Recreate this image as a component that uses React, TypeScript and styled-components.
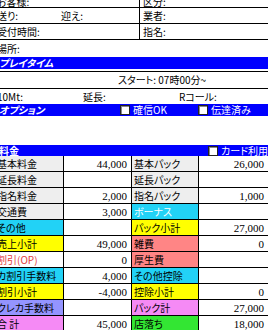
import styled, { createGlobalStyle } from 'styled-components';

const GlobalStyle = createGlobalStyle`
  html, body {
    margin: 0;
    padding: 0;
    background: #ffffff;
    overflow: hidden;
  }
  body {
    font-family: "Noto Sans CJK JP", "Noto Sans", sans-serif;
    font-size: 10px;
    font-feature-settings: "palt";
    color: #000000;
  }
`;

type Fill = 'grey' | 'cyan' | 'yellow' | 'salmon' | 'violet' | 'pink' | 'green' | 'white';

const fills: Record<Fill, string> = {
  grey: '#eeeeee',
  cyan: '#22d2f6',
  yellow: '#ffff00',
  salmon: '#ff8585',
  violet: '#9494ff',
  pink: '#f58af5',
  green: '#33e633',
  white: '#ffffff',
};

type FeeRow = {
  left: string;
  leftFill: Fill;
  leftValue: string;
  leftInk?: string;
  right: string;
  rightFill: Fill;
  rightValue: string;
  rightInk?: string;
};

const rows: FeeRow[] = [
  { left: '基本料金', leftFill: 'grey', leftValue: '44,000', right: '基本パック', rightFill: 'grey', rightValue: '26,000' },
  { left: '延長料金', leftFill: 'grey', leftValue: '', right: '延長パック', rightFill: 'grey', rightValue: '' },
  { left: '指名料金', leftFill: 'grey', leftValue: '2,000', right: '指名パック', rightFill: 'grey', rightValue: '1,000' },
  { left: '交通費', leftFill: 'grey', leftValue: '3,000', right: 'ボーナス', rightFill: 'cyan', rightValue: '', rightInk: '#ffffff' },
  { left: 'その他', leftFill: 'cyan', leftValue: '', right: 'パック小計', rightFill: 'yellow', rightValue: '27,000' },
  { left: '売上小計', leftFill: 'yellow', leftValue: '49,000', right: '雑費', rightFill: 'salmon', rightValue: '0' },
  { left: '割引(OP)', leftFill: 'white', leftValue: '0', leftInk: '#e23a3a', right: '厚生費', rightFill: 'salmon', rightValue: '' },
  { left: 'カ割引手数料', leftFill: 'cyan', leftValue: '4,000', right: 'その他控除', rightFill: 'cyan', rightValue: '' },
  { left: '割引小計', leftFill: 'yellow', leftValue: '-4,000', right: '控除小計', rightFill: 'yellow', rightValue: '0' },
  { left: 'クレカ手数料', leftFill: 'violet', leftValue: '', right: 'パック計', rightFill: 'pink', rightValue: '27,000' },
  { left: '合 計', leftFill: 'pink', leftValue: '45,000', right: '店落ち', rightFill: 'green', rightValue: '18,000' },
];

export default function App() {
  return (
    <>
      <GlobalStyle />
      <Sheet>
        <InfoGrid>
          <TopCell>
            <Clipped>お客様:</Clipped>
          </TopCell>
          <TopCell $last>
            <span>区分:</span>
          </TopCell>
          <InfoCell>
            <Clipped>送り:</Clipped>
            <Pickup>迎え:</Pickup>
          </InfoCell>
          <InfoCell $last>
            <span>業者:</span>
          </InfoCell>
          <InfoCell>
            <Clipped>受付時間:</Clipped>
          </InfoCell>
          <InfoCell $last>
            <span>指名:</span>
          </InfoCell>
        </InfoGrid>
        <PlaceRow>
          <Clipped>場所:</Clipped>
        </PlaceRow>

        <SectionBar>
          <BarTitle $italic>プレイタイム</BarTitle>
        </SectionBar>
        <StartRow>スタート: 07時00分~</StartRow>
        <ExtendRow>
          <ExtCell $width={83}>
            <Clipped>10Mt:</Clipped>
          </ExtCell>
          <ExtCell $width={96}>延長:</ExtCell>
          <ExtCell $width={89}>Rコール:</ExtCell>
        </ExtendRow>

        <SectionBar>
          <BarTitle $italic>オプション</BarTitle>
          <CheckGroup $left={120}>
            <CheckBox />
            <span>確信OK</span>
          </CheckGroup>
          <CheckGroup $left={198}>
            <CheckBox />
            <span>伝達済み</span>
          </CheckGroup>
        </SectionBar>

        <Gap />

        <SectionBar $height={11}>
          <BarTitle>料金</BarTitle>
          <CheckGroup $left={208}>
            <CheckBox />
            <span>カード利用</span>
          </CheckGroup>
        </SectionBar>

        <FeeGrid>
          {rows.map((r) => (
            <FeeLine key={r.left}>
              <LabelCell $fill={r.leftFill} $ink={r.leftInk} $clip>
                {r.left}
              </LabelCell>
              <ValueCell>{r.leftValue}</ValueCell>
              <LabelCell $fill={r.rightFill} $ink={r.rightInk}>
                {r.right}
              </LabelCell>
              <ValueCell $edge>{r.rightValue}</ValueCell>
            </FeeLine>
          ))}
        </FeeGrid>
      </Sheet>
    </>
  );
}

const Sheet = styled.div`
  width: 268px;
  height: 330px;
  overflow: hidden;
  display: flex;
  flex-direction: column;
`;

const Clipped = styled.span`
  margin-left: -3px;
  white-space: nowrap;
`;

const InfoGrid = styled.div`
  display: grid;
  grid-template-columns: 140px 128px;
  grid-template-rows: 8px 16px 16px;
  flex-shrink: 0;
`;

const TopCell = styled.div<{ $last?: boolean }>`
  display: flex;
  align-items: flex-end;
  overflow: hidden;
  line-height: 10px;
  padding-left: ${(p) => (p.$last ? '3px' : '0')};
  border-right: ${(p) => (p.$last ? 'none' : '1px solid #000')};
  border-bottom: 1px solid #000;
`;

const InfoCell = styled.div<{ $last?: boolean }>`
  display: flex;
  align-items: center;
  line-height: 12px;
  padding-left: ${(p) => (p.$last ? '3px' : '0')};
  border-right: ${(p) => (p.$last ? 'none' : '1px solid #000')};
  border-bottom: 1px solid #000;
`;

const Pickup = styled.span`
  margin-left: 43px;
`;

const PlaceRow = styled.div`
  height: 17px;
  display: flex;
  align-items: center;
  line-height: 12px;
  flex-shrink: 0;
`;

const SectionBar = styled.div<{ $height?: number }>`
  position: relative;
  height: ${(p) => p.$height ?? 12}px;
  background: #0000ff;
  color: #ffffff;
  display: flex;
  align-items: center;
  flex-shrink: 0;
  overflow: hidden;
  white-space: nowrap;
`;

const BarTitle = styled.span<{ $italic?: boolean }>`
  font-weight: 700;
  font-style: ${(p) => (p.$italic ? 'italic' : 'normal')};
  line-height: 10px;
  margin-left: -1px;
`;

const CheckGroup = styled.div<{ $left: number }>`
  position: absolute;
  left: ${(p) => p.$left}px;
  top: 0;
  bottom: 0;
  display: flex;
  align-items: center;
  gap: 3px;
  line-height: 10px;
  white-space: nowrap;
`;

const CheckBox = styled.span`
  width: 8px;
  height: 8px;
  flex-shrink: 0;
  background: #ffffff;
  border: 1px solid #222222;
  box-shadow: inset 1px 1px 0 #888888;
`;

const StartRow = styled.div`
  height: 16px;
  margin-top: 2px;
  border-top: 1px solid #000;
  border-bottom: 1px solid #000;
  display: flex;
  align-items: center;
  padding-left: 118px;
  line-height: 12px;
  flex-shrink: 0;
`;

const ExtendRow = styled.div`
  height: 15px;
  display: flex;
  align-items: center;
  line-height: 12px;
  flex-shrink: 0;
`;

const ExtCell = styled.div<{ $width: number }>`
  width: ${(p) => p.$width}px;
  flex-shrink: 0;
`;

const Gap = styled.div`
  height: 29px;
  flex-shrink: 0;
`;

const FeeGrid = styled.div`
  display: flex;
  flex-direction: column;
`;

const FeeLine = styled.div`
  display: grid;
  grid-template-columns: 64px 68px 67px 69px;
  height: 16px;
  flex-shrink: 0;
`;

const LabelCell = styled.div<{ $fill: Fill; $ink?: string; $clip?: boolean }>`
  background: ${(p) => fills[p.$fill]};
  color: ${(p) => p.$ink ?? '#000000'};
  border-right: 1px solid #000;
  border-bottom: 1px solid #000;
  display: flex;
  align-items: center;
  padding-left: ${(p) => (p.$clip ? '0' : '2px')};
  text-indent: ${(p) => (p.$clip ? '-3px' : '0')};
  white-space: nowrap;
  overflow: hidden;
  line-height: 12px;
`;

const ValueCell = styled.div<{ $edge?: boolean }>`
  background: #ffffff;
  border-right: ${(p) => (p.$edge ? 'none' : '1px solid #000')};
  border-bottom: 1px solid #000;
  display: flex;
  align-items: center;
  justify-content: flex-end;
  padding-right: 4px;
  font-family: "Liberation Serif", "Times New Roman", serif;
  font-size: 11px;
  line-height: 12px;
`;
